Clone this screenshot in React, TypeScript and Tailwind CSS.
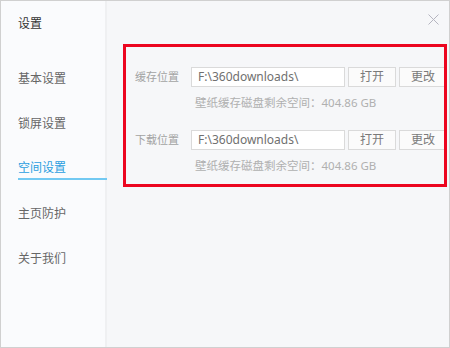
import React from "react";

const font = { fontFamily: '"Noto Sans", "Noto Sans CJK SC", sans-serif' };

function Row({ label }: { label: string }) {
  return (
    <div className="flex flex-col">
      <div className="flex items-center h-[20px]">
        <div className="w-[56px] text-[11px] leading-[20px] text-[#a3a3a3]">{label}</div>
        <div className="w-[154px] h-[20px] bg-white border border-[#dadada] pl-[6px] text-[12px] leading-[18px] text-[#707070]">
          F:\360downloads\
        </div>
        <div className="ml-[3px] w-[48px] h-[20px] bg-[#fbfbfb] border border-[#dadada] text-[12px] leading-[18px] text-[#7a7a7a] text-center">
          打开
        </div>
        <div className="ml-[3px] w-[48px] h-[20px] bg-[#fbfbfb] border border-[#dadada] text-[12px] leading-[18px] text-[#7a7a7a] text-center">
          更改
        </div>
      </div>
      <div className="mt-[8px] ml-[60px] text-[11.5px] leading-[16px] text-[#b0b0b0]">
        壁纸缓存磁盘剩余空间：404.86 GB
      </div>
    </div>
  );
}

export default function App() {
  const items = ["基本设置", "锁屏设置", "空间设置", "主页防护", "关于我们"];
  return (
    <div
      style={font}
      className="relative w-[450px] h-[348px] border border-[#d0d0d0] flex overflow-hidden"
    >
      <div className="w-[106px] h-full bg-[#fafbfd] border-r-2 border-[#eff0f2] flex flex-col">
        <div className="mt-[16px] ml-[17px] text-[12px] leading-[14px] text-[#333]">设置</div>
        <div className="mt-[25px] flex flex-col">
          {items.map((it) =>
            it === "空间设置" ? (
              <div key={it} className="h-[45px] ml-[17px]">
                <div className="pt-[15px] pb-[4px] text-[12px] leading-[13px] text-[#2a9ee0] border-b-2 border-[#72c9f2] mr-[-2px]">
                  {it}
                </div>
              </div>
            ) : (
              <div key={it} className="h-[45px] ml-[17px] pt-[16px] text-[12px] leading-[13px] text-[#666]">
                {it}
              </div>
            )
          )}
        </div>
      </div>
      <div className="relative flex-1 h-full bg-[#f6f7f9] pl-[28px] pt-[66px]">
        <svg className="absolute top-[13px] right-[10px]" width="11" height="11" viewBox="0 0 11 11">
          <path d="M0.5 0.5 L10.5 10.5 M10.5 0.5 L0.5 10.5" stroke="#b5b5c0" strokeWidth="1" />
        </svg>
        <div className="flex flex-col gap-[19px]">
          <Row label="缓存位置" />
          <Row label="下载位置" />
        </div>
      </div>
      <div className="absolute left-[122px] top-[43px] w-[324px] h-[143px] border-[3px] border-[#ec0620]" />
    </div>
  );
}
